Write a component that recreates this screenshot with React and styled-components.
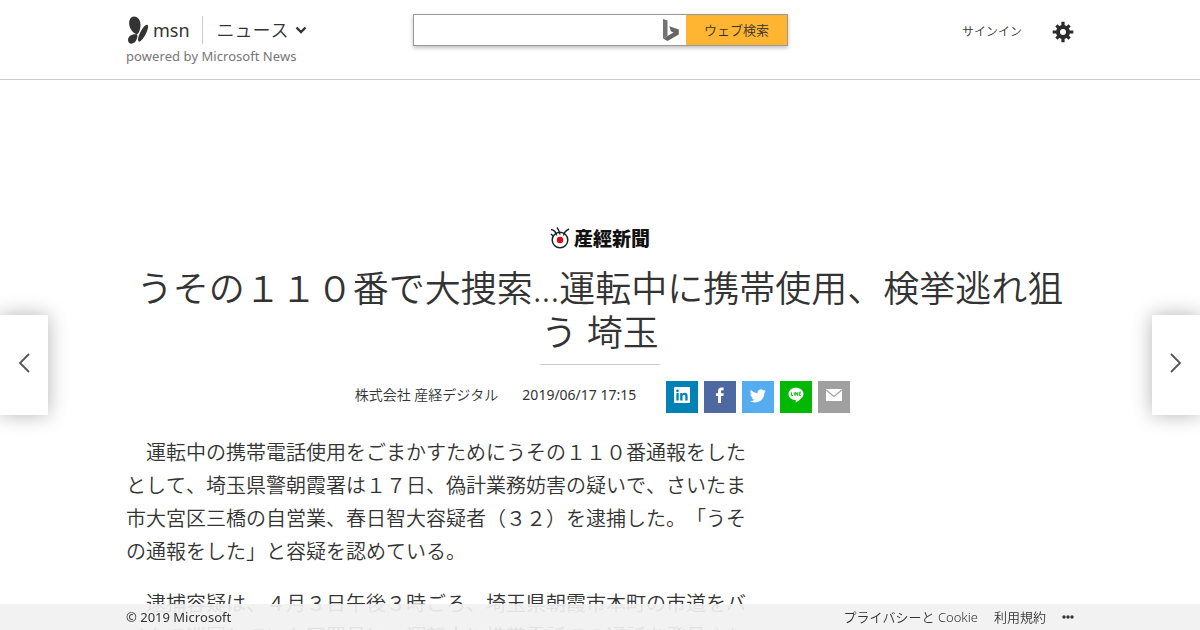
import React from "react";
import styled, { createGlobalStyle } from "styled-components";

const App = () => (
  <>
    <GlobalStyle />
    <Header>
      <HeaderInner>
        <Brand>
          <BrandRow>
            <LogoLink href="#msn">
              <Butterfly />
              <span>msn</span>
            </LogoLink>
            <SectionButton type="button">
              ニュース
              <Icon viewBox="0 0 12 8" width="12" height="8">
                <path
                  d="M1.500 1.500L6 6l4.500-4.500"
                  fill="none"
                  stroke="#333"
                  strokeWidth="2.4"
                />
              </Icon>
            </SectionButton>
          </BrandRow>
          <Powered>powered by Microsoft News</Powered>
        </Brand>
        <Search role="search" onSubmit={e => e.preventDefault()}>
          <SearchInput type="text" aria-label="ウェブ検索" />
          <BingMark>
            <Bing />
          </BingMark>
          <SearchButton type="submit">ウェブ検索</SearchButton>
        </Search>
        <Account>
          <SignIn href="#signin">サインイン</SignIn>
          <SettingsButton type="button" aria-label="設定">
            <Gear />
          </SettingsButton>
        </Account>
      </HeaderInner>
    </Header>

    <Article>
      <Source href="#sankei">
        <SankeiMark />
        産經新聞
      </Source>
      <Title>うその１１０番で大捜索...運転中に携帯使用、検挙逃れ狙う 埼玉</Title>
      <Rule />
      <Meta>
        <Publisher>株式会社 産経デジタル</Publisher>
        <time dateTime="2019-06-17T17:15">2019/06/17 17:15</time>
        <Share>
          {networks.map(({ name, color, icon }) => (
            <ShareLink
              key={name}
              href={"#" + name}
              aria-label={name}
              color={color}
            >
              {icon}
            </ShareLink>
          ))}
        </Share>
      </Meta>
      <Body>
        <p>
          運転中の携帯電話使用をごまかすためにうその１１０番通報をしたとして、埼玉県警朝霞署は１７日、偽計業務妨害の疑いで、さいたま市大宮区三橋の自営業、春日智大容疑者（３２）を逮捕した。「うその通報をした」と容疑を認めている。
        </p>
        <p>
          逮捕容疑は、４月３日午後３時ごろ、埼玉県朝霞市本町の市道をバイクで巡回していた同署員に、運転中に携帯電話での通話を発見され
        </p>
      </Body>
    </Article>

    <PageButton type="button" side="left" aria-label="前へ">
      <Icon viewBox="0 0 12 20" width="12" height="20">
        <path
          d="M11 1L2 10l9 9"
          fill="none"
          stroke="#555"
          strokeWidth="1.8"
        />
      </Icon>
    </PageButton>
    <PageButton type="button" side="right" aria-label="次へ">
      <Icon viewBox="0 0 12 20" width="12" height="20">
        <path
          d="M1 1l9 9-9 9"
          fill="none"
          stroke="#555"
          strokeWidth="1.8"
        />
      </Icon>
    </PageButton>

    <Footer>
      <FooterInner>
        <span>© 2019 Microsoft</span>
        <FooterNav>
          <a href="#privacy">プライバシーと Cookie</a>
          <a href="#terms">利用規約</a>
          <MoreButton type="button" aria-label="その他">
            <Icon viewBox="0 0 12 4" width="12" height="4" fill="#333">
              <circle cx="2" cy="2" r="1.7" />
              <circle cx="6" cy="2" r="1.7" />
              <circle cx="10" cy="2" r="1.7" />
            </Icon>
          </MoreButton>
        </FooterNav>
      </FooterInner>
    </Footer>
  </>
);

const Butterfly = () => (
  <Icon viewBox="0 0 22 28" width="22" height="28" fill="#333">
    <path d="M2.500 10C1.200 4.500 3.500.5 7 .5c4.200 0 6.500 4 6.500 8.500 0 4-1.500 8-3.500 9.500C7 17.500 3.500 14 2.500 10z" />
    <path d="M1 24c0-4 3.500-6.300 9-5.800 1.200 2-.5 6.300-2.500 8.300-3 2.300-6.500 1-6.500-2.500z" />
    <path d="M11.800 25.500c-1.500-1-.6-5 1.400-9 2-4 5.200-8.500 7.200-7.700 1.500.8.500 5-1.500 9-2 4-5.500 8.700-7.100 7.700z" />
  </Icon>
);

const Bing = () => (
  <Icon viewBox="0 0 16 22" width="16" height="22">
    <path d="M0 0l4.500 1.600v15.200L0 19.500z" fill="#737373" />
    <path
      d="M6.300 7.200l9.500 3.400v4.800L4.500 22 0 19.400l4.500-2.500 6-3.400-2.600-1.300z"
      fill="#666"
    />
  </Icon>
);

const Gear = () => (
  <Icon viewBox="-11 -11 22 22" width="22" height="22" fill="#2b2b2b">
    <path d="M-1.600-10.300h3.200v20.600h-3.200zM-10.300-1.600v3.200h20.600v-3.200z" />
    <path
      d="M-6.600-6.600L6.600 6.600M-6.600 6.600L6.600-6.600"
      stroke="#2b2b2b"
      strokeWidth="3.200"
    />
    <circle r="7" />
    <circle r="3" fill="#fff" />
  </Icon>
);

const SankeiMark = () => (
  <Icon viewBox="0 0 21 22" width="21" height="22">
    <circle
      cx="10"
      cy="13"
      r="7.800"
      fill="#fff"
      stroke="#222"
      strokeWidth="1.500"
    />
    <circle cx="10" cy="13" r="3.200" fill="#e60012" />
    <path
      d="M6.500 8.500C6 5 4 3 1 2.500M10 7.500C9.500 4.500 8.500 2.500 7 .5M13.500 8.500c.5-3 2.500-5 5.500-6.500M3.500 9.500L1 7"
      fill="none"
      stroke="#222"
      strokeWidth="1.400"
    />
  </Icon>
);

const Icon = styled.svg`
  display: block;
  flex: none;
`;

const networks = [
  {
    name: "LinkedIn",
    color: "#0282b4",
    icon: (
      <Icon viewBox="0 0 16 16" width="16" height="16">
        <rect width="16" height="16" rx="1" fill="#fff" />
        <path
          d="M2.400 6h2.300v7.500H2.400zM3.500 2.400a1.400 1.400 0 110 2.800 1.400 1.400 0 010-2.800zM6.200 6h2.200v1c.5-.8 1.300-1.200 2.300-1.200 2.200 0 2.900 1.300 2.900 3.500v4.200h-2.300V9.700c0-1.200-.2-1.900-1.300-1.900s-1.500.8-1.500 1.900v3.800H6.200z"
          fill="#0282b4"
        />
      </Icon>
    )
  },
  {
    name: "Facebook",
    color: "#4e68a1",
    icon: (
      <Icon viewBox="0 0 10 16" width="10" height="16" fill="#fff">
        <path d="M3 16V9H1V6.200h2V4.300C3 1.600 4.300.4 6.600.4h2v2.800H7.200C6.300 3.200 6 3.600 6 4.400v1.800h2.700L8.300 9H6v7z" />
      </Icon>
    )
  },
  {
    name: "Twitter",
    color: "#55acee",
    icon: (
      <Icon viewBox="0 2 24 24" width="16" height="16" fill="#fff">
        <g transform="translate(0 2)">
          <path d="M23.600 5.900c-.9.400-1.800.6-2.800.8 1-.6 1.800-1.600 2.200-2.700-1 .6-2 1-3.100 1.200A4.900 4.900 0 0011.500 9.700 14 14 0 011.400 4.600a4.900 4.900 0 001.500 6.600c-.8 0-1.600-.2-2.200-.6v.1c0 2.400 1.700 4.400 3.900 4.800-.7.200-1.500.2-2.200.1.600 2 2.400 3.400 4.600 3.400A9.900 9.900 0 010 21a14 14 0 007.500 2.200c9.100 0 14-7.500 14-14v-.6c1-.7 1.800-1.600 2.100-2.700z" />
        </g>
      </Icon>
    )
  },
  {
    name: "LINE",
    color: "#00b900",
    icon: (
      <Icon viewBox="0 0 16 16" width="16" height="16">
        <path
          d="M8 .8c4.200 0 7.500 2.700 7.500 6.100 0 2.800-3.300 5.800-7.400 8.500-.5.200-.4-.2-.3-1.200.1-.7-.1-1.100-.7-1.200C3.300 12.600.5 10.200.5 6.900.5 3.500 3.800.8 8 .8z"
          fill="#fff"
        />
        <path
          d="M3.500 5.300v3.200h1.600M6.300 5.300v3.200M7.700 8.500V5.300l1.900 3.200V5.300M12.800 5.300h-1.600v3.200h1.600M11.200 6.900h1.500"
          fill="none"
          stroke="#00b900"
          strokeWidth=".9"
        />
      </Icon>
    )
  },
  {
    name: "Mail",
    color: "#a0a0a0",
    icon: (
      <Icon viewBox="0 0 16 12" width="16" height="12">
        <rect width="16" height="12" fill="#fff" />
        <path
          d="M0 1l8 6.500L16 1"
          fill="none"
          stroke="#a0a0a0"
          strokeWidth="1.200"
        />
      </Icon>
    )
  }
];

const GlobalStyle = createGlobalStyle`
  * {
    box-sizing: border-box;
  }
  body {
    margin: 0;
    height: 100vh;
    overflow: hidden;
    background: #fff;
    color: #333;
    font: 13px/20px "Noto Sans", "Noto Sans CJK JP", sans-serif;
    font-kerning: none;
    text-spacing-trim: space-all;
  }
  a {
    color: inherit;
    text-decoration: none;
  }
  button {
    padding: 0;
    border: 0;
    background: none;
    color: inherit;
    font: inherit;
    cursor: pointer;
  }
`;

const Header = styled.header`
  height: 80px;
  border-bottom: 1px solid #ccc;
`;

const HeaderInner = styled.div`
  display: grid;
  grid-template-columns: 287px 375px 1fr;
  align-items: start;
  max-width: 948px;
  margin: 0 auto;
  padding-top: 14px;
`;

const Brand = styled.div`
  display: flex;
  flex-direction: column;
`;

const BrandRow = styled.div`
  display: flex;
  align-items: center;
  height: 32px;
`;

const LogoLink = styled.a`
  display: flex;
  align-items: center;
  gap: 4px;
  height: 28px;
  padding: 0 12px 0 1px;
  border-right: 1px solid #ccc;
  font-size: 18px;
`;

const SectionButton = styled.button`
  display: flex;
  align-items: center;
  gap: 6px;
  margin-left: 14px;
  font-size: 18px;
  font-weight: 350;
`;

const Powered = styled.span`
  color: #767676;
`;

const Search = styled.form`
  display: flex;
  height: 32px;
  border: 1px solid #999;
  background: #fff;
  box-shadow: 0 2px 4px rgba(0, 0, 0, 0.25);
`;

const SearchInput = styled.input`
  flex: 1;
  min-width: 0;
  padding: 0 10px;
  border: 0;
  outline: 0;
  background: none;
  font: inherit;
`;

const BingMark = styled.span`
  display: flex;
  align-items: center;
  padding: 0 7px;
`;

const SearchButton = styled.button`
  width: 101px;
  background: #ffb432;
  font-weight: 350;
`;

const Account = styled.div`
  display: flex;
  align-items: center;
  justify-content: flex-end;
  gap: 30px;
  height: 36px;
`;

const SignIn = styled.a`
  font-size: 12px;
  font-weight: 350;
`;

const SettingsButton = styled.button`
  display: flex;
`;

const Article = styled.main`
  max-width: 948px;
  margin: 0 auto;
  padding-top: 144px;
`;

const Source = styled.a`
  display: flex;
  justify-content: center;
  align-items: center;
  gap: 3px;
  height: 28px;
  color: #111;
  font: 900 19px/28px "Noto Sans CJK JP", sans-serif;
`;

const Title = styled.h1`
  margin: 15px 0 9px;
  font-size: 36px;
  line-height: 44px;
  font-weight: 350;
  text-align: center;
`;

const Rule = styled.hr`
  width: 120px;
  margin: 0 auto;
  border: 0;
  border-top: 1px solid #ccc;
`;

const Meta = styled.div`
  display: flex;
  justify-content: center;
  gap: 24px;
  margin-top: 16px;
  padding-left: 5px;
  font-size: 14px;
  line-height: 28px;
`;

const Publisher = styled.span`
  font-weight: 350;
`;

const Share = styled.div`
  display: flex;
  gap: 6px;
  margin-left: 6px;
`;

const ShareLink = styled.a`
  display: flex;
  align-items: center;
  justify-content: center;
  width: 32px;
  height: 32px;
  padding-bottom: 4px;
  background: ${props => props.color};
`;

const Body = styled.div`
  max-width: 624px;
  margin-top: 23px;
  font-size: 20px;
  line-height: 33px;
  font-weight: 350;

  p {
    margin: 0 0 19px;
    text-indent: 1em;
  }
`;

const PageButton = styled.button`
  position: fixed;
  top: 50%;
  ${props => props.side}: 0;
  display: flex;
  align-items: center;
  justify-content: center;
  width: 48px;
  height: 100px;
  padding-bottom: 4px;
  background: #fff;
  box-shadow: 0 0 20px rgba(0, 0, 0, 0.3);
`;

const Footer = styled.footer`
  position: fixed;
  right: 0;
  bottom: 0;
  left: 0;
  background: rgba(241, 241, 241, 0.92);
`;

const FooterInner = styled.div`
  display: flex;
  align-items: center;
  justify-content: space-between;
  max-width: 948px;
  height: 26px;
  margin: 0 auto;
`;

const FooterNav = styled.nav`
  display: flex;
  align-items: center;
  gap: 16px;

  a {
    font-weight: 350;
  }
`;

const MoreButton = styled.button`
  display: flex;
  padding: 4px 0;
`;

export default App;
